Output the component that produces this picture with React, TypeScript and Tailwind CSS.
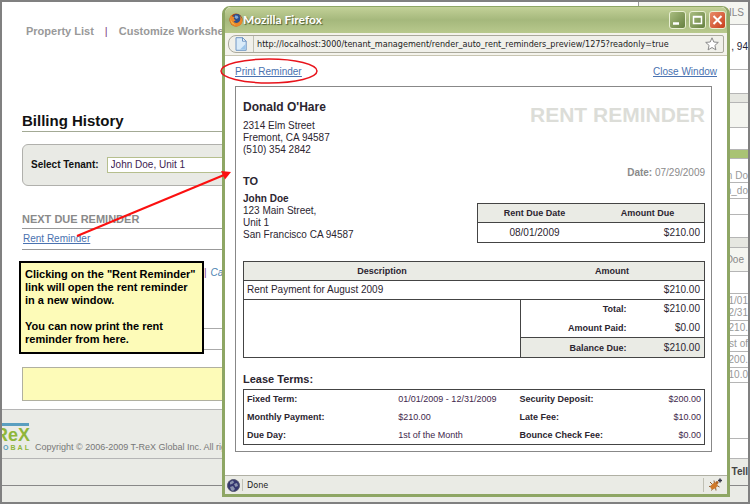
import React from 'react';

interface WindowButtonProps {
    label: string;
    className: string;
    children: React.ReactNode;
}

interface SidebarRow {
    lines: string[];
    className: string;
}

const SIDEBAR_ROWS: SidebarRow[] = [
    { lines: ['ILS'], className: 'h-[23px] bg-[#f4f5f0] pr-1 text-[#888] border-b' },
    { lines: [', 94'], className: 'h-[45px] text-[#223] border-b' },
    { lines: [], className: 'h-6 border-b' },
    { lines: [], className: 'h-[9px] bg-[#e6e7e1] border-b' },
    { lines: [], className: 'h-[25px] bg-[#f4f5f0] border-b' },
    { lines: [], className: 'h-[21px]' },
    { lines: [], className: 'h-[10px] bg-[#a9c374] border-y border-[#829b55]' },
    { lines: ['an Do'], className: 'h-6 items-end text-[#999] border-b' },
    { lines: ['n_do'], className: 'h-4 text-[#999] border-b' },
    { lines: [], className: 'h-4 border-b' },
    { lines: [], className: 'h-[23px] border-b' },
    { lines: [], className: 'h-[10px] bg-[#e6e7e1] border-b' },
    { lines: ['Doe'], className: 'h-6 bg-[#f4f5f0] pr-1 text-[#888] border-b' },
    { lines: [], className: 'h-[22px] border-b' },
    { lines: ['01/01', '12/31'], className: 'h-[27px] text-[#999] border-b' },
    { lines: ['$210.'], className: 'h-[15px] text-[#999] border-b' },
    { lines: ['1st of'], className: 'h-4 text-[#999] border-b' },
    { lines: ['$200.'], className: 'h-4 text-[#999] border-b' },
    { lines: ['$10.0'], className: 'h-[15px] text-[#999] border-b' },
    { lines: [], className: 'h-14 border-b' },
];

const LEASE_TERMS = [
    ['Fixed Term:', '01/01/2009 - 12/31/2009', 'Security Deposit:', '$200.00'],
    ['Monthly Payment:', '$210.00', 'Late Fee:', '$10.00'],
    ['Due Day:', '1st of the Month', 'Bounce Check Fee:', '$0.00'],
];

const FirefoxIcon = () => (
    <svg width="14" height="14" viewBox="0 0 14 14" aria-hidden="true">
        <circle cx="7" cy="7" r="6.5" fill="#b5470f" />
        <circle cx="7.8" cy="5.8" r="4.8" fill="#2c4f8c" />
        <path d="M6 2.5l2.5.3 1 1.7-1.7 1.4-2-.8z" fill="#7fa9d8" />
        <path d="M1 3.5L2.6 2l.6 1.6 2.4.4-.8 1.8 1.8 1.6L4.6 8.6c1.6 2.4 5.4 1.6 6.4-1 .6-1.6.4-3.4-.6-5 2.6 1.6 3.6 4.6 2.6 7.2-1.2 3-4.2 4-6.8 3.6C2.4 12.8 0 9 1 3.5z" fill="#e8872a" />
        <path d="M1.6 5c.4 3.4 2.4 6 6 6.4-3.8 1-6.4-2.2-6-6.4z" fill="#f6c34c" />
    </svg>
);

const PageIcon = () => (
    <svg width="12" height="14" viewBox="0 0 12 14" aria-hidden="true">
        <path d="M1 .7h6.5l3.7 3.5v9.1H1z" fill="#d9ebf9" stroke="#7096c4" />
        <path d="M7.5.7v3.5h3.7z" fill="#fff" stroke="#7096c4" />
        <path d="M5 12.5L10.5 7v5.5z" fill="#9cc5ea" />
    </svg>
);

const StarIcon = () => (
    <svg width="14" height="14" viewBox="0 0 14 14" aria-hidden="true">
        <path d="M7 .8l1.8 4.2 4.5.4-3.4 3 1 4.5L7 10.5l-3.9 2.4 1-4.5-3.4-3 4.5-.4z" fill="#fff" stroke="#8a8a8a" />
    </svg>
);

const GlobeIcon = () => (
    <svg width="13" height="13" viewBox="0 0 13 13" aria-hidden="true">
        <circle cx="6.5" cy="6.5" r="6" fill="#34366f" stroke="#55586e" />
        <path d="M3 3l3-1.5 1 2-2 1.5-2 .5zM7 5l3-1 1 3-2.5 1zM3 8l3-1 2 3-2 2-2-1z" fill="#8b93ad" />
    </svg>
);

const BugIcon = () => (
    <svg width="14" height="14" viewBox="0 0 14 14" aria-hidden="true">
        <path d="M2 4l3 3M6 2.5l.5 3M1 8.5l4-.5M3.5 12.5L5.5 9M8 12.5L7.5 9M11.5 9L8 7" stroke="#8a5a30" fill="none" />
        <ellipse cx="6" cy="8" rx="4" ry="2.5" transform="rotate(-40 6 8)" fill="#d07a2a" />
        <circle cx="9" cy="4.6" r="1.5" fill="#b06322" />
        <path d="M10 2.5h4M12 .5v4" stroke="#334" strokeWidth="1.5" />
    </svg>
);

const WindowButton = ({ label, className, children }: WindowButtonProps) => (
    <button type="button" aria-label={label}
            className={`flex h-[18px] w-[17px] items-center justify-center rounded-[3px] border border-[#e8efd2] ${className}`}>
        <svg width="15" height="16" viewBox="0 0 15 16">
            {children}
        </svg>
    </button>
);

const Logo = () => (
    <div className="mt-[5px] -ml-[7px] w-[34px] shrink-0">
        <div className="h-[3px] bg-[#5a9fc0]" />
        <div className="text-[18px] leading-[18px] font-bold text-[#8fb63a]">ReX</div>
        <div className="flex justify-between pl-[8px] text-[7px] leading-[7px] font-bold text-[#8fb63a]">
            <span className="text-[#5a9fc0]">O</span>
            <span>B</span>
            <span>A</span>
            <span>L</span>
        </div>
    </div>
);

const Sidebar = () => (
    <aside className="w-[110px] shrink-0 overflow-hidden border-l border-[#999] bg-white">
        {SIDEBAR_ROWS.map((row, index) => (
            <div key={index}
                 className={`flex items-center justify-end border-[#b5b5b5] text-[10px] leading-3 whitespace-nowrap ${row.className}`}>
                <div>
                    {row.lines.map(line => <div key={line}>{line}</div>)}
                </div>
            </div>
        ))}
    </aside>
);

const BillingHistory = () => (
    <main className="min-w-0 flex-1">
        <div className="pl-5">
            <nav className="flex gap-[11px] pt-[22px] pl-1 text-[11px] leading-[14px] font-bold text-[#999]">
                <a href="#">Property List</a>
                <span className="font-normal text-[#804080]">|</span>
                <a href="#">Customize Workshe</a>
            </nav>
            <h1 className="mt-[73px] border-b border-[#a3aa95] text-[15px] leading-5 font-bold text-[#111]">
                Billing History
            </h1>
            <div className="mt-3 flex items-center gap-2 rounded-md border border-[#b0b0ac] bg-[#e9eae5] py-3 pl-2">
                <label htmlFor="tenant" className="text-[10px] leading-4 font-bold text-[#111]">Select Tenant:</label>
                <select id="tenant"
                        className="h-4 w-48 appearance-none border border-[#b6bf8e] bg-white pl-[3px] text-[10px] leading-3 text-[#3d1c50]">
                    <option>John Doe, Unit 1</option>
                </select>
            </div>
            <h2 className="mt-[26px] border-b border-[#999] pb-[2px] text-[11px] leading-[14px] font-bold text-[#8a8a8a]">
                NEXT DUE REMINDER
            </h2>
            <div className="border-b border-[#999] py-1 pl-px text-[10px] leading-3">
                <a href="#" className="text-[#4a72b0] underline">Rent Reminder</a>
            </div>
            <div className="mt-[17px] flex gap-1 pl-[182px] text-[10px] leading-3">
                <span className="text-[#804080]">|</span>
                <a href="#" className="text-[#4a82b0] italic">Ca</a>
            </div>
            <div className="mt-[49px] h-[22px] border-y border-[#aaa]" />
            <div className="mt-[17px] h-[34px] border border-[#b0b0a0] bg-[#fdfbb8]" />
        </div>
        <div className="mt-2 flex h-[49px] items-center border-t border-[#b5b5b5] bg-[#eaebe6]">
            <Logo />
            <span className="pt-[26px] pl-[6px] text-[9px] leading-[10px] whitespace-nowrap text-[#777]">
                Copyright © 2006-2009 T-ReX Global Inc. All rig
            </span>
        </div>
    </main>
);

const DueTable = () => (
    <table className="mt-6 w-[228px] border-collapse border border-[#444] text-[10px] leading-3">
        <thead>
            <tr className="h-[19px] border-b border-[#444] bg-[#eaebe5] text-[9px]">
                <th className="w-1/2 p-0">Rent Due Date</th>
                <th className="p-0">Amount Due</th>
            </tr>
        </thead>
        <tbody>
            <tr className="h-5">
                <td className="p-0 text-center">08/01/2009</td>
                <td className="p-0 pr-1 text-right">$210.00</td>
            </tr>
        </tbody>
    </table>
);

const ChargesTable = () => (
    <table className="mt-[18px] w-full border-collapse border border-[#444] text-[10px] leading-3">
        <thead>
            <tr className="h-[19px] border-b border-[#444] bg-[#eaebe5] text-[9px]">
                <th className="w-3/5 p-0">Description</th>
                <th colSpan={2} className="p-0">Amount</th>
            </tr>
        </thead>
        <tbody>
            <tr className="h-[19px] border-b border-[#444]">
                <td className="p-0 pl-[3px]">Rent Payment for August 2009</td>
                <td colSpan={2} className="p-0 pr-1 text-right">$210.00</td>
            </tr>
            <tr className="h-[19px]">
                <td rowSpan={3} className="border-r border-[#444] p-0" />
                <th className="p-0 text-right text-[9px]">Total:</th>
                <td className="w-[78px] p-0 pr-1 text-right">$210.00</td>
            </tr>
            <tr className="h-[19px] border-b border-[#444]">
                <th className="p-0 text-right text-[9px]">Amount Paid:</th>
                <td className="p-0 pr-1 text-right">$0.00</td>
            </tr>
            <tr className="h-5 bg-[#eaebe5]">
                <th className="p-0 text-right text-[9px]">Balance Due:</th>
                <td className="p-0 pr-1 text-right">$210.00</td>
            </tr>
        </tbody>
    </table>
);

const LeaseTerms = () => (
    <>
        <h3 className="mt-[14px] text-[11px] leading-[14px] font-bold">Lease Terms:</h3>
        <div className="mt-[3px] border border-[#444] px-[3px]">
            <table className="w-full table-fixed text-[9px] leading-3">
                <tbody>
                    {LEASE_TERMS.map(([term, value, fee, amount]) => (
                        <tr key={term} className="h-[18px]">
                            <th className="w-1/3 p-0 text-left">{term}</th>
                            <td className="w-4/15 p-0 text-[#42284c]">{value}</td>
                            <th className="p-0 text-left">{fee}</th>
                            <td className="p-0 text-right text-[#42284c]">{amount}</td>
                        </tr>
                    ))}
                </tbody>
            </table>
        </div>
    </>
);

const Invoice = () => (
    <section className="mr-[15px] ml-[10px] border border-[#888] pt-[13px] pr-[6px] pb-[6px] pl-[7px] text-[10px] leading-3 text-[#2b2530]">
        <div className="flex justify-between">
            <div>
                <h2 className="text-[12px] leading-[14px] font-bold">Donald O'Hare</h2>
                <address className="mt-[6px] not-italic">
                    2314 Elm Street<br />
                    Fremont, CA 94587<br />
                    (510) 354 2842
                </address>
                <h3 className="mt-[19px] text-[11px] leading-3 font-bold">TO</h3>
                <address className="mt-[6px] not-italic">
                    <strong>John Doe</strong><br />
                    123 Main Street,<br />
                    Unit 1<br />
                    San Francisco CA 94587
                </address>
            </div>
            <div className="flex flex-col items-end">
                <h1 className="mt-[3px] text-[21px] leading-6 font-bold text-[#dcddd8]">RENT REMINDER</h1>
                <p className="mt-10 text-[#8a8a8a]"><strong>Date:</strong> 07/29/2009</p>
                <DueTable />
            </div>
        </div>
        <ChargesTable />
        <LeaseTerms />
    </section>
);

const FirefoxWindow = () => (
    <div className="absolute top-1 right-[18px] left-[220px] flex flex-col rounded-t-lg border-[3px] border-t border-[#8ea664] bg-white">
        <div className="flex h-[26px] items-center rounded-t-md bg-linear-to-b from-[#c3d198] via-[#a5b87c] to-[#b8c98d] pr-px pl-1">
            <FirefoxIcon />
            <div className="flex-1 font-[Lato,sans-serif] text-[12px] leading-4 font-bold text-white [text-shadow:1px_1px_1px_#4d5c33]">
                Mozilla Firefox
            </div>
            <div className="flex gap-[3px]">
                <WindowButton label="Minimize" className="bg-linear-to-br from-[#a9bd80] to-[#66803f]">
                    <path d="M3 11.5h6" stroke="#fff" strokeWidth="2.5" />
                </WindowButton>
                <WindowButton label="Maximize" className="bg-linear-to-br from-[#a9bd80] to-[#66803f]">
                    <path d="M3.5 4.5h8v7h-8zM3 5h9" stroke="#fff" strokeWidth="1.5" fill="none" />
                </WindowButton>
                <WindowButton label="Close" className="bg-linear-to-br from-[#e88a68] to-[#c83c18]">
                    <path d="M3.5 4l8 8M11.5 4l-8 8" stroke="#fff" strokeWidth="2" />
                </WindowButton>
            </div>
        </div>
        <div className="border-b border-[#c8c5b2] bg-[#f4f3ec] px-[3px] py-[2px]">
            <div className="flex h-[18px] items-center rounded-l-lg rounded-r-xs border border-[#aaa99c] bg-[#f0f0ea]">
                <div className="flex h-full w-[25px] items-center justify-center border-r border-[#c0c0b4]">
                    <PageIcon />
                </div>
                <input aria-label="Address" readOnly
                       className="min-w-0 flex-1 bg-transparent pl-[3px] font-['DejaVu_Sans_Condensed','DejaVu_Sans',sans-serif] text-[9px] leading-4 text-[#222]"
                       defaultValue="http://localhost:3000/tenant_management/render_auto_rent_reminders_preview/1275?readonly=true" />
                <button type="button" aria-label="Bookmark" className="pr-1">
                    <StarIcon />
                </button>
            </div>
        </div>
        <div className="flex justify-between px-[10px] pt-[10px] pb-2 text-[10px] leading-3 text-[#4a72b0] underline">
            <a href="#">Print Reminder</a>
            <a href="#">Close Window</a>
        </div>
        <Invoice />
        <div className="mt-[23px] flex h-[19px] items-center border-t border-[#b0b0a4] bg-[#eaebe5] pr-[5px] pl-[2px] text-[10px] leading-3 text-[#222]">
            <GlobeIcon />
            <span className="ml-[2px] border-l border-[#c0c0b4] pl-1 font-['DejaVu_Sans_Condensed','DejaVu_Sans',sans-serif] text-[9px]">Done</span>
            <span className="ml-auto border-l border-[#c0c0b4] pl-1"><BugIcon /></span>
        </div>
    </div>
);

const Callout = () => (
    <div className="absolute top-[259px] left-[17px] w-[185px] border-2 border-black bg-[#fdfbb8] px-1 pt-[5px] pb-[6px] text-[11px] leading-[13px] font-bold text-black">
        <p>
            Clicking on the "Rent Reminder"<br />
            link will open the rent reminder<br />
            in a new window.
        </p>
        <p className="mt-[13px]">
            You can now print the rent<br />
            reminder from here.
        </p>
    </div>
);

const Annotations = () => (
    <svg className="pointer-events-none absolute -top-[2px] -left-[2px] h-full w-full" aria-hidden="true">
        <ellipse cx="269" cy="71" rx="48" ry="12" fill="none" stroke="#e8131b" strokeWidth="1.5" />
        <path d="M77 236L224 175" stroke="#fb1010" strokeWidth="2" />
        <path d="M231 172l-10-1 4 8.5z" fill="#fb1010" />
    </svg>
);

const App = () => {
    return (
        <div className="relative flex min-h-screen flex-col overflow-hidden border-2 border-[#808080] bg-white font-['Liberation_Sans',Arial,sans-serif]">
            <div className="flex">
                <BillingHistory />
                <Sidebar />
            </div>
            <footer className="flex flex-1 flex-col bg-[#eaebe6] text-[10px] leading-3 font-bold text-[#444]">
                <div className="flex h-7 items-center justify-end border-y border-t-[#b5b5b5] border-b-[#888]">
                    Tell
                </div>
            </footer>
            <FirefoxWindow />
            <Callout />
            <Annotations />
        </div>
    );
};

export default App;
